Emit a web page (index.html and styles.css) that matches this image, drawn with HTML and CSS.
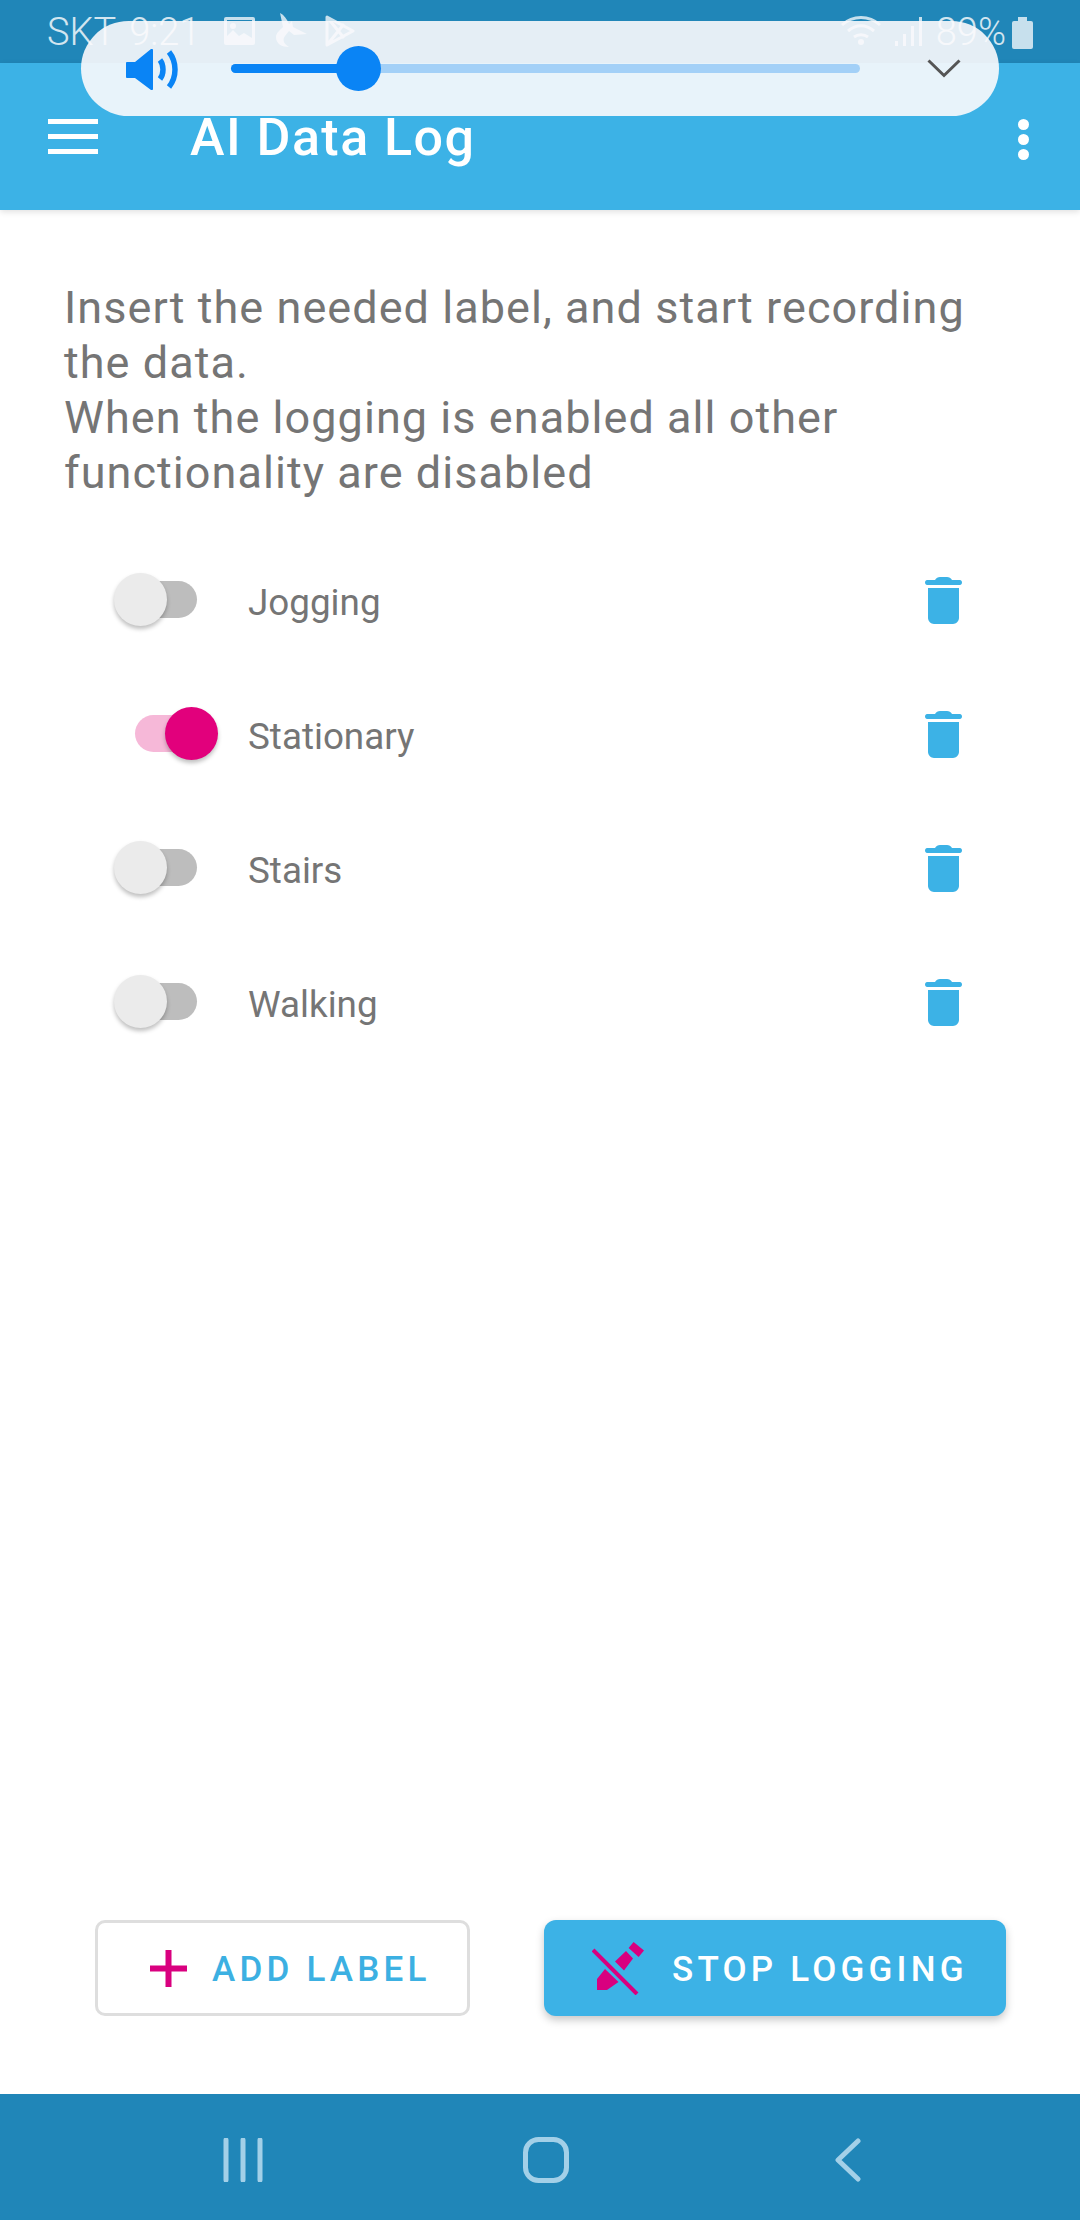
FILE: index.html
```html
<!DOCTYPE html>
<html lang="en">
<head>
<meta charset="utf-8">
<title>AI Data Log</title>
<link rel="stylesheet" href="styles.css">
</head>
<body>
<div class="app">
  <div class="status">
    <span class="carrier">SKT</span>
    <span class="clock">9:21</span>
    <svg class="st-icon st-image" viewBox="0 0 31 28"><path fill-rule="evenodd" d="M2 0h27a2 2 0 0 1 2 2v24a2 2 0 0 1-2 2H2a2 2 0 0 1-2-2V2a2 2 0 0 1 2-2zM3 3v16l6-6 6 6 5-3 8 5V3zM9 6a3 3 0 1 1 0 6 3 3 0 0 1 0-6z" fill="#fff"/></svg>
    <svg class="st-icon st-bird" viewBox="0 0 33 36"><path d="M6 0c4 2 7 6 9 11l3-3 1 6 14 7-13 1-5-4-4 5c-3 4-1 8 4 11-7 0-13-3-13-10 0-4 4-7 7-10z" fill="#fff"/></svg>
    <svg class="st-icon st-play" viewBox="0 0 32 34"><path d="M3 3l26 14L3 31zM3 3l17 21M3 31l17-21" fill="none" stroke="#fff" stroke-width="3" stroke-linejoin="round"/></svg>
    <span class="st-spacer"></span>
    <svg class="st-icon st-wifi" viewBox="0 0 42 30"><path d="M2 10c11-10 27-10 38 0M8 16c8-7 18-7 26 0M14 22c4-3 10-3 14 0" fill="none" stroke="#fff" stroke-width="3"/><circle cx="21" cy="27" r="3" fill="#fff"/></svg>
    <svg class="st-icon st-signal" viewBox="0 0 28 29"><path d="M1 24h3v5H1zM9 17h3v12H9zM17 9h3v20h-3zM25 0h3v29h-3z" fill="#fff"/></svg>
    <span class="battery-text">89%</span>
    <span class="battery"><span class="battery-cap"></span><span class="battery-body"></span></span>
  </div>

  <header class="toolbar">
    <div class="menu"><span></span><span></span><span></span></div>
    <h1 class="title">AI Data Log</h1>
    <div class="more"><span></span><span></span><span></span></div>
  </header>

  <main class="content">
    <p class="intro">Insert the needed label, and start recording<br>the data.<br>When the logging is enabled all other<br>functionality are disabled</p>
    <ul class="labels">
      <li class="row">
        <span class="switch"><span class="track"></span><span class="thumb"></span></span>
        <span class="label">Jogging</span>
        <svg class="trash" viewBox="0 0 37 47"><path d="M10 3c1-2 3-3 5-3h7c2 0 4 1 5 3h8c1 0 2 1 2 2.500S36 8 35 8H2C1 8 0 7 0 5.500S1 3 2 3zM3 11h31v30c0 3-3 6-6 6H9c-3 0-6-3-6-6z"/></svg>
      </li>
      <li class="row">
        <span class="switch on"><span class="track"></span><span class="thumb"></span></span>
        <span class="label">Stationary</span>
        <svg class="trash" viewBox="0 0 37 47"><path d="M10 3c1-2 3-3 5-3h7c2 0 4 1 5 3h8c1 0 2 1 2 2.500S36 8 35 8H2C1 8 0 7 0 5.500S1 3 2 3zM3 11h31v30c0 3-3 6-6 6H9c-3 0-6-3-6-6z"/></svg>
      </li>
      <li class="row">
        <span class="switch"><span class="track"></span><span class="thumb"></span></span>
        <span class="label">Stairs</span>
        <svg class="trash" viewBox="0 0 37 47"><path d="M10 3c1-2 3-3 5-3h7c2 0 4 1 5 3h8c1 0 2 1 2 2.500S36 8 35 8H2C1 8 0 7 0 5.500S1 3 2 3zM3 11h31v30c0 3-3 6-6 6H9c-3 0-6-3-6-6z"/></svg>
      </li>
      <li class="row">
        <span class="switch"><span class="track"></span><span class="thumb"></span></span>
        <span class="label">Walking</span>
        <svg class="trash" viewBox="0 0 37 47"><path d="M10 3c1-2 3-3 5-3h7c2 0 4 1 5 3h8c1 0 2 1 2 2.500S36 8 35 8H2C1 8 0 7 0 5.500S1 3 2 3zM3 11h31v30c0 3-3 6-6 6H9c-3 0-6-3-6-6z"/></svg>
      </li>
    </ul>
  </main>

  <div class="actions">
    <button class="btn btn-add">
      <svg class="plus" viewBox="0 0 37 37"><path d="M15.500 0h6v15.500H37v6H21.500V37h-6V21.500H0v-6h15.500z"/></svg>
      <span>ADD LABEL</span>
    </button>
    <button class="btn btn-stop">
      <svg class="pen" viewBox="0 0 52 53"><path d="M41.600 0L52 8.600 46.600 15 36.600 6zM23 19.500L34 9l7 7.600-9 12zM13 27L26.500 40 15 48H5V37z"/><path d="M1 8L45 52" fill="none" stroke="#d9007f" stroke-width="4"/></svg>
      <span>STOP LOGGING</span>
    </button>
  </div>

  <nav class="navbar">
    <svg class="nav-recent" viewBox="0 0 40 44"><path d="M3 2v40M20 2v40M37 2v40" fill="none" stroke="#a3d0e8" stroke-width="5" stroke-linecap="round"/></svg>
    <svg class="nav-home" viewBox="0 0 46 46"><rect x="2.500" y="2.500" width="41" height="41" rx="13" fill="none" stroke="#a3d0e8" stroke-width="5"/></svg>
    <svg class="nav-back" viewBox="0 0 26 44"><path d="M23 3L3 22l20 19" fill="none" stroke="#a3d0e8" stroke-width="5" stroke-linecap="round" stroke-linejoin="round"/></svg>
  </nav>

  <div class="volume">
    <svg class="speaker" viewBox="0 0 53 41"><path d="M1 13h8L25 0c1-.5 2 0 2 1v39c0 1-1 1.500-2 1L9 29H1c-.5 0-1-.5-1-1V14c0-.5.500-1 1-1z" fill="#0a84f5"/><path d="M34 11c4 5 4 14 0 19M43 3c8 10 8 25 0 35" fill="none" stroke="#0a84f5" stroke-width="5.500"/></svg>
    <div class="slider"><span class="slider-fill"></span><span class="slider-thumb"></span></div>
    <svg class="chevron" viewBox="0 0 34 19"><path d="M1.500 1.500L17 16.500 32.500 1.500" fill="none" stroke="#555" stroke-width="3"/></svg>
  </div>
</div>
</body>
</html>
```
FILE: styles.css
```css
* { box-sizing: border-box; }
html, body { margin: 0; padding: 0; }
body { font-family: Roboto, "Liberation Sans", sans-serif; background: #fff; }

.app {
  position: relative;
  width: 1080px;
  height: 2220px;
  display: flex;
  flex-direction: column;
  overflow: hidden;
  background: #fff;
}

/* status bar */
.status {
  height: 63px;
  flex: none;
  background: #2086b8;
  padding: 0 47px 0 47px;
  display: flex;
  align-items: center;
  color: #fff;
  font-size: 38px;
  font-weight: 300;
}
.carrier { opacity: .8; margin-right: 13px; }
.clock { opacity: .8; margin-right: 24px; }
.st-icon { flex: none; display: block; opacity: .75; }
.st-image { width: 31px; height: 28px; margin-right: 19px; margin-top: -2px; }
.st-bird { width: 33px; height: 36px; margin-right: 17px; margin-top: -2px; }
.st-play { width: 32px; height: 34px; margin-top: -1px; }
.st-spacer { flex: 1; }
.st-wifi { width: 42px; height: 30px; margin-right: 12px; margin-top: -3px; }
.st-signal { width: 28px; height: 29px; margin-right: 14px; margin-top: -1px; }
.battery-text { opacity: .8; margin-right: 6px; }
.battery { display: flex; flex-direction: column; align-items: center; width: 21px; opacity: .75; margin-top: 2px; }
.battery-cap { width: 9px; height: 4px; background: #fff; }
.battery-body { width: 21px; height: 28px; background: #fff; border-radius: 2px; }

/* toolbar */
.toolbar {
  height: 147px;
  flex: none;
  background: #3cb2e6;
  display: flex;
  align-items: flex-start;
  padding: 56px 51px 0 48px;
  color: #fff;
  box-shadow: 0 2px 6px rgba(0, 0, 0, .12);
  position: relative;
}
.menu { width: 50px; display: flex; flex-direction: column; gap: 10px; }
.menu span { display: block; height: 5px; background: #fff; }
.title {
  margin: -10px 0 0 92px;
  font-size: 52px;
  line-height: 58px;
  font-weight: 500;
  letter-spacing: 1.450px;
  flex: 1;
}
.more { display: flex; flex-direction: column; gap: 4px; width: 11px; }
.more span { display: block; width: 11px; height: 11px; border-radius: 50%; background: #fff; }

/* content */
.content { flex: 1; padding: 70px 0 0; }
.intro {
  margin: 0 0 33px 64px;
  font-size: 45px;
  line-height: 55px;
  letter-spacing: 1.050px;
  color: #757575;
}
.labels { list-style: none; margin: 0; padding: 0; }
.row {
  height: 134px;
  display: flex;
  align-items: center;
  padding-left: 114px;
}
.switch { position: relative; width: 134px; height: 54px; flex: none; display: block; }
.track {
  position: absolute;
  left: 3px; top: 8px;
  width: 80px; height: 37px;
  border-radius: 19px;
  background: #bdbdbd;
}
.thumb {
  position: absolute;
  left: 0; top: 0;
  width: 53px; height: 53px;
  border-radius: 50%;
  background: #ebebeb;
  box-shadow: 0 3px 4px rgba(0, 0, 0, .25);
}
.switch.on .track { left: 21px; background: #f6b8d8; }
.switch.on .thumb { left: 51px; background: #e2007c; }
.label { font-size: 36.800px; color: #757575; flex: 1; padding-top: 4px; }
.trash { width: 37px; height: 47px; fill: #3cb2e6; flex: none; margin-right: 118px; }

/* actions */
.actions {
  flex: none;
  display: flex;
  justify-content: space-between;
  padding: 0 74px 78px 95px;
}
.btn {
  height: 96px;
  display: flex;
  align-items: center;
  font-family: Roboto, "Liberation Sans", sans-serif;
  font-size: 35px;
  font-weight: 500;
  letter-spacing: 4.200px;
  white-space: nowrap;
}
.btn span { padding-top: 2px; }
.btn-add {
  width: 375px;
  padding: 0 0 0 52px;
  background: #fff;
  border: 3px solid #dedede;
  border-radius: 10px;
  color: #3cb0e2;
}
.btn-stop {
  width: 462px;
  padding: 0 0 0 48px;
  background: #3cb2e6;
  border: 0;
  border-radius: 12px;
  color: #fff;
  box-shadow: 0 4px 8px rgba(0, 0, 0, .22);
}
.plus { width: 37px; height: 37px; fill: #d9007f; margin-right: 25px; flex: none; }
.pen { width: 52px; height: 53px; fill: #d9007f; margin-right: 28px; flex: none; }

/* nav bar */
.navbar {
  height: 126px;
  flex: none;
  background: #2086b8;
  position: relative;
}
.nav-recent, .nav-home, .nav-back { position: absolute; top: 44px; }
.nav-recent { left: 223px; width: 40px; height: 44px; }
.nav-home { left: 523px; top: 43px; width: 46px; height: 46px; }
.nav-back { left: 835px; width: 26px; height: 44px; }

/* volume overlay */
.volume {
  position: absolute;
  left: 81px; top: 21px;
  width: 918px; height: 95px;
  border-radius: 48px;
  background: rgba(251, 250, 252, .9);
  display: flex;
  align-items: center;
  padding: 0 38px 0 45px;
}
.speaker { width: 53px; height: 41px; flex: none; margin-top: 1px; }
.slider {
  margin-left: 52px;
  width: 629px;
  height: 9px;
  border-radius: 5px;
  background: #a3d0f7;
  position: relative;
  flex: none;
  margin-top: -1px;
}
.slider-fill {
  position: absolute;
  left: 0; top: 0; bottom: 0;
  width: 127px;
  border-radius: 5px;
  background: #0a84f5;
}
.slider-thumb {
  position: absolute;
  left: 105px; top: -18px;
  width: 45px; height: 45px;
  border-radius: 50%;
  background: #0a84f5;
}
.chevron { width: 34px; height: 19px; flex: none; margin-left: 67px; margin-top: -1px; }
```
